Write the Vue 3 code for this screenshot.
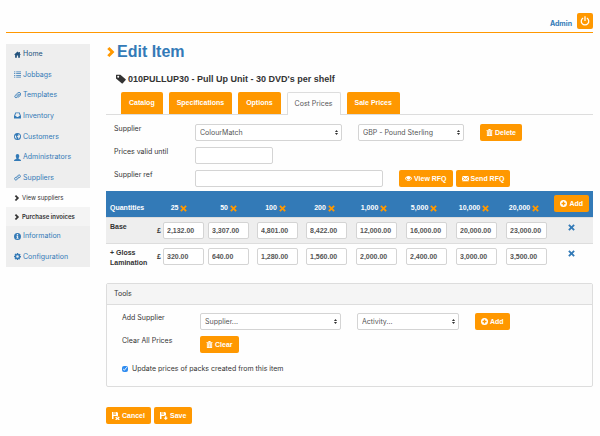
<script setup>
import { h, ref } from 'vue'

const paths = {
  home: 'M8 1 0 8.8H2.5V15.5H6.5V10H9.5V15.5H13.5V8.8H16L13.5 6V2H11V4Z',
  list: 'M0 1H3V3H0ZM5 1H16V3H5ZM0 5H3V7H0ZM5 5H16V7H5ZM0 9H3V11H0ZM5 9H16V11H5ZM0 13H3V15H0ZM5 13H16V15H5Z',
  inbox: 'M3 1H13L16 9V15H0V9ZM4.5 3 2.6 9H5L6 11.5H10L11 9H13.4L11.5 3Z',
  globe: 'M8 0A8 8 0 1 0 8 16A8 8 0 1 0 8 0ZM9 2 13 4 14 8 12 12 10 13.5 9.5 10 7 8.5 8 6 11 5ZM3 5 5 7 4.5 9 6 11 6 13.5 3 11.5 2 8Z',
  user: 'M8 0C10.5 0 12 2 12 4.5C12 7 11 8.5 10.5 9.5V11L15 13Q16 13.5 16 16H0Q0 13.5 1 13L5.5 11V9.5C5 8.5 4 7 4 4.5C4 2 5.5 0 8 0Z',
  info: 'M8 0A8 8 0 1 0 8 16A8 8 0 1 0 8 0ZM6.5 2.5H9.5V5H6.5ZM5.5 6.5H9.5V11.5H10.5V13H5.5V11.5H6.5V8H5.5Z',
  cog: 'M6.5 0H9.5L10 2.3 11.5 3 13.5 1.6 15 4 13.5 6 14 7H16V10H14L13 11.7 14 13.7 12 15 10.3 13.6 9.5 14V16H6.5V14L5 13.5 3.3 14.7 1.3 13 2.6 11 2 9.5H0V6.5H2L2.8 5 1.3 3 3.3 1.3 5.2 2.6 6.2 2.2ZM8 5A3 3 0 1 0 8 11A3 3 0 1 0 8 5Z',
  chevron: 'M2 3 5.5 0 13.5 8 5.5 16 2 13 7 8Z',
  tag: 'M0 1.5Q0 1 .5 1H7L15.5 8.5Q16 9 15.5 9.5L10.5 15Q10 15.5 9.5 15L0 7ZM3.5 2.8A1.6 1.6 0 1 0 3.5 6A1.6 1.6 0 1 0 3.5 2.8Z',
  trash: 'M6 0H10L11 2H15V4H1V2H5ZM2 5H14V16H2ZM4 7V14H5V7ZM7.5 7V14H8.5V7ZM11 7V14H12V7Z',
  eye: 'M8 2.5C12 2.5 14.5 5.5 16 8.2C14.5 11 12 13.5 8 13.5C4 13.5 1.5 11 0 8.2C1.5 5.5 4 2.5 8 2.5ZM4.3 5.5C3 6.3 2.3 7.2 1.8 8.2C3.2 10.5 5 12 8 12C11 12 12.8 10.5 14.2 8.2C13.7 7.2 13 6.3 11.7 5.5A4 4 0 1 1 4.3 5.5Z',
  envelope: 'M0 2H16L8 9ZM0 4 5 8.5 0 13ZM16 4V13L11 8.5ZM0 14.5 6 9.3 8 11 10 9.3 16 14.5Z',
  remove: 'M3.5 0.5 8 5 12.5 0.5 15.5 3.5 11 8 15.5 12.5 12.5 15.5 8 11 3.5 15.5 0.5 12.5 5 8 0.5 3.5Z',
  plus: 'M8 0A8 8 0 1 0 8 16A8 8 0 1 0 8 0ZM6.5 3.5H9.5V6.5H12.5V9.5H9.5V12.5H6.5V9.5H3.5V6.5H6.5Z',
  floppyX: 'M0 0H3V5.5H8V0H10L12 2V8L10.5 9.5 9 8H3V14H0ZM5 0H7V4.5H5ZM8 9.5 10.8 11.3 13.5 9 15.5 11 13 13 15.5 15 13.5 16.5 10.8 14.7 8 16.5 6.5 15 8.8 13 6.5 11Z',
  floppySave: 'M0 0H3V5.5H8V0H10L12 2V7H9V8H3V14H0ZM5 0H7V4.5H5ZM10 8.5H13V11.5H16L11.5 16 7 11.5H10Z',
  arrows: 'M8 0 13 6.5H3ZM8 16 3 9.5H13Z'
}
const strokes = {
  clip: 'M5 10 10.5 4.5A1.5 1.5 0 0 1 12.5 6.5L6.5 12.5A3 3 0 0 1 2.3 8.3L8.5 2.3A3.9 3.9 0 0 1 14.5 7.5L9 13',
  link: 'M7 10.5A3 3 0 0 1 6.5 6.5L10 2.6A3 3 0 0 1 14.3 6.5L11.5 9.5M9 5.5A3 3 0 0 1 9.5 9.5L6 13.4A3 3 0 0 1 1.7 9.5L4.5 6.5',
  power: 'M5 3.2A6 6 0 1 0 11 3.2M8 0.5V8'
}

const Icon = (props) =>
  h('svg', { viewBox: '0 0 16 16', 'aria-hidden': 'true' }, [
    strokes[props.name]
      ? h('path', { d: strokes[props.name], fill: 'none', stroke: 'currentColor', 'stroke-width': 2 })
      : h('path', { d: paths[props.name], fill: 'currentColor', 'fill-rule': 'evenodd' })
  ])
Icon.props = ['name']

const topNav = [
  { icon: 'home', label: 'Home', active: true },
  { icon: 'list', label: 'Jobbags' },
  { icon: 'clip', label: 'Templates' },
  { icon: 'inbox', label: 'Inventory' },
  { icon: 'globe', label: 'Customers' },
  { icon: 'user', label: 'Administrators' },
  { icon: 'link', label: 'Suppliers' }
]
const subNav = [
  { label: 'View suppliers' },
  { label: 'Purchase invoices', active: true }
]
const bottomNav = [
  { icon: 'info', label: 'Information' },
  { icon: 'cog', label: 'Configuration' }
]
const tabs = ['Catalog', 'Specifications', 'Options', 'Cost Prices', 'Sale Prices']
const activeTab = ref('Cost Prices')

const columns = [46, 54, 45, 49, 49, 50, 50, 50, 50, 44]
const quantities = ['25', '50', '100', '200', '1,000', '5,000', '10,000', '20,000']
const rows = ref([
  { label: 'Base', prices: ['2,132.00', '3,307.00', '4,801.00', '8,422.00', '12,000.00', '16,000.00', '20,000.00', '23,000.00'] },
  { label: '+ Gloss Lamination', prices: ['320.00', '640.00', '1,280.00', '1,560.00', '2,000.00', '2,400.00', '3,000.00', '3,500.00'] }
])
const validUntil = ref('')
const supplierRef = ref('')
const updatePacks = ref(true)
</script>

<template>
  <div class="page">
    <header class="topbar">
      <a href="#" class="admin">Admin</a>
      <button type="button" class="power" aria-label="Log out"><Icon name="power" class="icon-lg" /></button>
    </header>

    <div class="layout">
      <nav class="sidebar">
        <ul class="nav nav-top">
          <li v-for="item in topNav" :key="item.label">
            <a href="#" :class="{ active: item.active }"><Icon :name="item.icon" class="icon" />{{ item.label }}</a>
          </li>
        </ul>
        <ul class="nav nav-sub">
          <li v-for="item in subNav" :key="item.label">
            <a href="#" :class="{ active: item.active }"><Icon name="chevron" class="icon-sm" />{{ item.label }}</a>
          </li>
        </ul>
        <ul class="nav nav-bottom">
          <li v-for="item in bottomNav" :key="item.label">
            <a href="#"><Icon :name="item.icon" class="icon" />{{ item.label }}</a>
          </li>
        </ul>
      </nav>

      <main class="main">
        <h1><Icon name="chevron" class="icon-lg" />Edit Item</h1>
        <h2><Icon name="tag" class="icon-lg" />010PULLUP30 - Pull Up Unit - 30 DVD's per shelf</h2>

        <div class="tabs" role="tablist">
          <button
            v-for="tab in tabs"
            :key="tab"
            type="button"
            role="tab"
            class="tab"
            :class="{ current: tab === activeTab }"
            :aria-selected="tab === activeTab"
            @click="activeTab = tab"
          >{{ tab }}</button>
        </div>

        <form class="details" @submit.prevent>
          <label for="supplier">Supplier</label>
          <div class="fields">
            <span class="select wide">
              <select id="supplier"><option>ColourMatch</option></select>
              <Icon name="arrows" class="arrows" />
            </span>
            <span class="select currency">
              <select aria-label="Currency"><option>GBP - Pound Sterling</option></select>
              <Icon name="arrows" class="arrows" />
            </span>
            <button type="button" class="btn"><Icon name="trash" class="icon" />Delete</button>
          </div>
          <label for="valid">Prices valid until</label>
          <div class="fields"><input id="valid" v-model="validUntil" type="text" class="date" /></div>
          <label for="ref">Supplier ref</label>
          <div class="fields">
            <input id="ref" v-model="supplierRef" type="text" class="reference" />
            <div class="pair">
              <button type="button" class="btn"><Icon name="eye" class="icon" />View RFQ</button>
              <button type="button" class="btn"><Icon name="envelope" class="icon" />Send RFQ</button>
            </div>
          </div>
        </form>

        <table class="prices">
          <colgroup><col v-for="(w, i) in columns" :key="i" :style="{ width: w + 'px' }" /></colgroup>
          <thead>
            <tr>
              <th scope="col" class="name">Quantities</th>
              <th v-for="q in quantities" :key="q" scope="col">
                {{ q }} <button type="button" class="remove" :aria-label="'Remove ' + q"><Icon name="remove" class="icon" /></button>
              </th>
              <th scope="col" class="add"><button type="button" class="btn"><Icon name="plus" class="icon" />Add</button></th>
            </tr>
          </thead>
          <tbody>
            <tr v-for="row in rows" :key="row.label">
              <th scope="row" class="name">{{ row.label }}</th>
              <td v-for="(q, i) in quantities" :key="q">
                <div class="price">
                  <span v-if="i === 0">£</span>
                  <input v-model="row.prices[i]" type="text" :aria-label="row.label + ' ' + q" />
                </div>
              </td>
              <td class="end"><button type="button" class="remove" :aria-label="'Remove ' + row.label"><Icon name="remove" class="icon" /></button></td>
            </tr>
          </tbody>
        </table>

        <section class="panel">
          <h3>Tools</h3>
          <div class="panel-body">
            <div class="tools">
              <label for="add-supplier">Add Supplier</label>
              <div class="fields">
                <span class="select tool-supplier">
                  <select id="add-supplier"><option>Supplier...</option></select>
                  <Icon name="arrows" class="arrows" />
                </span>
                <span class="select activity">
                  <select aria-label="Activity"><option>Activity...</option></select>
                  <Icon name="arrows" class="arrows" />
                </span>
                <button type="button" class="btn"><Icon name="plus" class="icon" />Add</button>
              </div>
              <span>Clear All Prices</span>
              <div class="fields"><button type="button" class="btn"><Icon name="trash" class="icon" />Clear</button></div>
            </div>
            <label class="check"><input v-model="updatePacks" type="checkbox" />Update prices of packs created from this item</label>
          </div>
        </section>

        <div class="actions">
          <button type="button" class="btn"><Icon name="floppyX" class="icon-md" />Cancel</button>
          <button type="button" class="btn"><Icon name="floppySave" class="icon-md" />Save</button>
        </div>
      </main>
    </div>
  </div>
</template>

<style>
body {
  background: #fefefe;
}
</style>

<style scoped>
.page {
  --bold: "Liberation Sans", Arial, sans-serif;
  padding: 0 7px 12px 6px;
  font: 7px/10px Inter, "Liberation Sans", sans-serif;
  color: #333;
}
.page *,
.page *::before {
  box-sizing: border-box;
}
button,
input,
select {
  font: inherit;
  color: inherit;
  margin: 0;
}
button {
  border: 0;
  cursor: pointer;
}
a {
  color: #337ab7;
  text-decoration: none;
}
.icon {
  width: 7px;
  height: 7px;
  flex: none;
}
.icon-sm {
  width: 6px;
  height: 6px;
  flex: none;
}
.icon-md {
  width: 8px;
  height: 8px;
  flex: none;
}
.icon-lg {
  width: 10px;
  height: 10px;
  flex: none;
}
.topbar {
  display: flex;
  justify-content: flex-end;
  align-items: center;
  gap: 5px;
  padding: 13px 0 3px;
  border-bottom: 1px solid #ff9800;
}
.admin {
  font-weight: 700;
  padding-top: 6px;
}
.power {
  display: flex;
  align-items: center;
  justify-content: center;
  width: 16px;
  height: 16px;
  padding: 0;
  border-radius: 2px;
  background: #ff9800;
  color: #fff;
}
.layout {
  display: grid;
  grid-template-columns: 84px minmax(0, 1fr);
  gap: 16px;
  align-items: start;
  padding-top: 11px;
}
.sidebar {
  background: #eee;
}
.nav {
  display: grid;
  grid-auto-rows: 1fr;
  list-style: none;
  margin: 0;
  padding: 0;
}
.nav a {
  display: flex;
  align-items: center;
  gap: 2px;
  height: 100%;
  padding: 0 8px;
}
.nav .active {
  color: #23527c;
}
.nav-top {
  min-height: 144px;
}
.nav-sub {
  min-height: 38px;
  background: #fefefe;
}
.nav-bottom {
  min-height: 41px;
}
.nav-sub a {
  color: #333;
  font-size: 6px;
}
.nav-sub .active {
  background: #f4f4f4;
  color: #333;
  font-weight: 600;
}
h1,
h2,
h3 {
  display: flex;
  align-items: center;
  margin: 0;
}
h1 {
  gap: 1px;
  font: 700 16px/16px var(--bold);
  color: #337ab7;
}
h1 .icon-lg {
  color: #ff9800;
}
h2 {
  gap: 2px;
  padding: 13px 0 7px 10px;
  font: 700 9px/12px var(--bold);
}
.tabs {
  display: flex;
  gap: 6px;
  padding-left: 15px;
  border-bottom: 1px solid #ddd;
}
.tab {
  height: 22px;
  padding: 0 8px;
  border-radius: 2px 2px 0 0;
  background: #ff9800;
  color: #fff;
  font-family: var(--bold);
  font-weight: 700;
}
.tab.current {
  margin-bottom: -1px;
  padding: 0 7px;
  border: 1px solid #ddd;
  border-bottom: 0;
  background: #fefefe;
  color: #555;
  font-family: inherit;
  font-weight: 400;
  height: 23px;
}
.details,
.tools {
  display: grid;
  row-gap: 6px;
}
.details {
  grid-template-columns: 81px minmax(0, 1fr);
  padding: 9px 8px 4px;
}
.tools {
  grid-template-columns: 78px minmax(0, 1fr);
}
.fields {
  display: flex;
  gap: 16px;
}
.pair,
.actions {
  display: flex;
  gap: 3px;
}
.select {
  position: relative;
}
.select select,
input[type='text'] {
  display: block;
  width: 100%;
  height: 17px;
  padding: 0 4px;
  border: 1px solid #d4d4d4;
  border-radius: 2px;
  background: #fff;
  color: #555;
  appearance: none;
}
.arrows {
  position: absolute;
  top: 5px;
  right: 3px;
  width: 5px;
  height: 7px;
  pointer-events: none;
}
.wide {
  width: 147px;
}
.currency {
  width: 106px;
}
.tool-supplier {
  width: 141px;
}
.activity {
  width: 102px;
}
input.date {
  width: 78px;
}
input.reference {
  width: 188px;
}
.btn {
  display: inline-flex;
  align-items: center;
  justify-content: center;
  gap: 2px;
  height: 17px;
  padding: 0 6px;
  border-radius: 2px;
  background: #ff9800;
  color: #fff;
  font-family: var(--bold);
  font-weight: 700;
  white-space: nowrap;
}
.prices {
  width: 100%;
  table-layout: fixed;
  border-collapse: collapse;
  font-family: var(--bold);
}
.prices th,
.prices td {
  padding: 4px 0;
  vertical-align: top;
  font-weight: 700;
}
.prices thead {
  background: #337ab7;
  color: #fff;
}
.prices thead th {
  height: 26px;
  padding: 12px 0 4px;
  white-space: nowrap;
}
.prices thead .add {
  padding: 4px 4px 4px 0;
  text-align: right;
}
.prices .name {
  padding-left: 4px;
  text-align: left;
}
.prices tbody tr {
  border-top: 1px solid #ddd;
}
.prices tbody tr:first-child {
  background: #eee;
}
.price {
  display: flex;
  align-items: center;
  justify-content: flex-end;
  gap: 2px;
  padding-right: 2px;
}
.price input[type='text'] {
  width: 41px;
  padding: 0 3px;
  font-weight: 700;
}
.remove {
  padding: 0;
  background: none;
  line-height: 6px;
  vertical-align: middle;
  color: #ff9800;
}
.remove svg {
  display: block;
}
.prices .end {
  text-align: center;
}
.end .remove {
  color: #337ab7;
}
.panel {
  margin-top: 11px;
  border: 1px solid #ddd;
  border-radius: 2px;
}
h3 {
  padding: 5px 7px;
  border-bottom: 1px solid #ddd;
  background: #f5f5f5;
  font: inherit;
}
.panel-body {
  padding: 8px 15px 12px;
}
.check {
  display: flex;
  align-items: center;
  gap: 4px;
  padding-top: 11px;
}
.check input {
  width: 6px;
  height: 6px;
  accent-color: #2f8cf0;
}
.actions {
  padding-top: 20px;
}
</style>
